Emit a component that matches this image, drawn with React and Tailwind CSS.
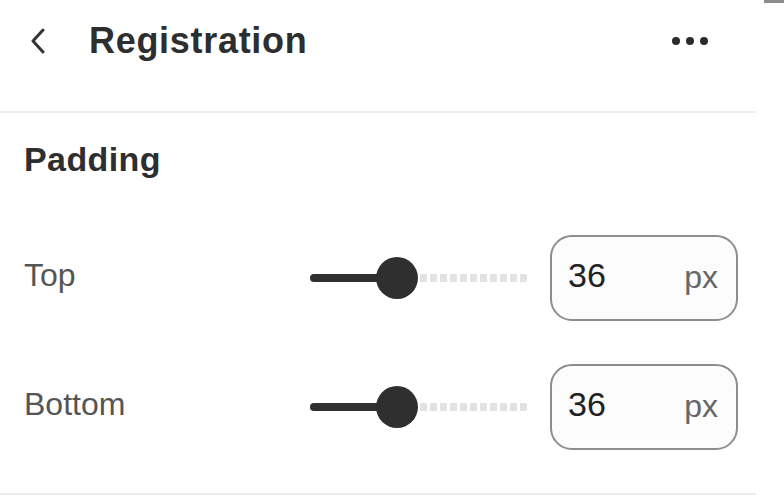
import React from 'react';

const Slider = ({ percent }) => {
    return (
        <div className="relative w-[218px] h-[44px] flex items-center">
            {/* unfilled dashed track */}
            <div className="absolute left-0 right-0 h-[8px] rounded-full bg-[repeating-linear-gradient(90deg,#e2e2e2_0px,#e2e2e2_7px,transparent_7px,transparent_10px)]" />
            <div className="absolute left-0 h-[8px] rounded-full bg-[#2f2f2f]" style={{ width: `${percent}%` }} />
            <div
                className="absolute w-[42px] h-[42px] rounded-full bg-[#2f2f2f] -translate-x-1/2"
                style={{ left: `${percent}%` }}
            />
        </div>
    );
};

const PaddingRow = ({ label, value }) => (
    <div className="flex items-center h-[86px]">
        <span className="w-[286px] pb-[6px] text-[32px] text-[#555] font-['Liberation_Sans',sans-serif]">{label}</span>
        <Slider percent={40} />
        <div className="ml-[22px] w-[188px] h-[86px] rounded-[22px] border-2 border-[#8d8d8d] bg-[#fcfcfc] flex items-center justify-between pl-[16px] pr-[18px] font-['Liberation_Sans',sans-serif]">
            <span className="text-[34px] text-[#222] pb-[6px]">{value}</span>
            <span className="text-[32px] text-[#666] pb-[2px]">px</span>
        </div>
    </div>
);

export default function App() {
    return (
        <div className="relative w-[784px] h-[500px] bg-white overflow-hidden">
            <div className="absolute right-0 top-0 w-[20px] h-[3px] bg-[#8c8c8c]" />
            <div className="w-[756px]">
                <div className="h-[113px] flex items-start pt-[19px] border-b-2 border-[#ececec]">
                    <div className="w-[89px] h-[44px] flex items-center pl-[30px]">
                        <svg width="16" height="26" viewBox="0 0 16 26">
                            <polyline points="13,2 3,13 13,24" fill="none" stroke="#333" strokeWidth="3" strokeLinecap="round" strokeLinejoin="round" />
                        </svg>
                    </div>
                    <h1 className="h-[44px] flex items-center text-[36px] font-bold text-[#2e2e2e] font-['Liberation_Sans',sans-serif] tracking-[0.7px]">
                        Registration
                    </h1>
                    <div className="ml-auto mr-[48px] h-[44px] flex items-center gap-[6px]">
                        <span className="w-[8px] h-[8px] rounded-full bg-[#2b2b2b]" />
                        <span className="w-[8px] h-[8px] rounded-full bg-[#2b2b2b]" />
                        <span className="w-[8px] h-[8px] rounded-full bg-[#2b2b2b]" />
                    </div>
                </div>
                <div className="pl-[24px] border-b-2 border-[#ececec] pb-[43px]">
                    <h2 className="pt-[26px] h-[75px] text-[34px] font-bold text-[#2e2e2e] font-['Liberation_Sans',sans-serif] leading-[40px] tracking-[0.4px]">
                        Padding
                    </h2>
                    <div className="flex flex-col gap-[43px] mt-[47px]">
                        <PaddingRow label="Top" value="36" />
                        <PaddingRow label="Bottom" value="36" />
                    </div>
                </div>
            </div>
        </div>
    );
}
